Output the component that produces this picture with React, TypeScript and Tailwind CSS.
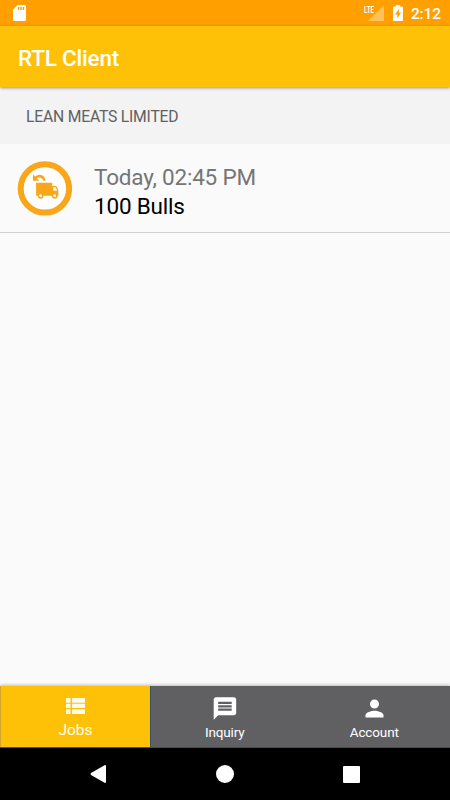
import type { ReactNode } from "react";

function StatusBar() {
  return (
    <div className="flex h-[26px] shrink-0 items-center bg-[#ffa000] text-white">
      <svg className="ml-[13px] h-4 w-[13px]" viewBox="0 0 13 16" fill="currentColor">
        <path
          fillRule="evenodd"
          d="M4.7 0H11.5Q13 0 13 1.5V14.5Q13 16 11.5 16H1.5Q0 16 0 14.5V4.7ZM4.9 2V5H6.4V2ZM7.3 2V5H8.8V2ZM9.7 2V5H11.2V2Z"
        />
      </svg>
      <div className="ml-auto mr-[9px] flex items-center">
        <div className="relative mr-[9px] h-4 w-5">
          <svg className="h-4 w-5" viewBox="0 0 20 16" fill="currentColor">
            <path d="M20 0V16H4Z" opacity="0.35" />
          </svg>
          <span className="absolute left-0 top-0 origin-left scale-x-[0.65] text-[9.5px] font-bold leading-[9px]">
            LTE
          </span>
        </div>
        <svg className="mr-2 h-4 w-[10px]" viewBox="0 0 10 16" fill="currentColor">
          <path
            fillRule="evenodd"
            d="M3 0H7V1.5H9Q10 1.5 10 2.5V15Q10 16 9 16H1Q0 16 0 15V2.5Q0 1.5 1 1.5H3ZM6.3 3.6L2 9.4H4.3V13.5L8 7.8H5.7Z"
          />
        </svg>
        <span className="mt-0.5 text-[15.5px] font-medium leading-4 tracking-[-0.1px]">2:12</span>
      </div>
    </div>
  );
}

function TruckIcon() {
  return (
    <svg className="h-[55px] w-[55px]" viewBox="-0.9 -0.4 55 55">
      <circle cx="27" cy="27" r="24.2" fill="#fff" stroke="#faa61a" strokeWidth="6" />
      <path
        d="M15 12.8L17.2 15Q20 12.8 23.2 13.6Q27.3 14.8 27.6 19.4H25.6Q24.6 16.4 22 16.1Q20 16 18.8 16.7L21.6 19.4H15Z"
        fill="#faa61a"
      />
      <path
        fillRule="evenodd"
        d="M18.2 21.3H34.3V34.4H18.2ZM34.3 24.6H37.2Q38.6 24.6 39.3 26L40.5 29.3V34.4H34.3ZM35.4 25.9V29.4H39.2L38.2 26.9Q37.9 25.9 37 25.9Z"
        fill="#faa61a"
      />
      <circle cx="22.7" cy="34.4" r="2.2" fill="#fff" stroke="#faa61a" strokeWidth="1.5" />
      <circle cx="36.8" cy="34.4" r="2.2" fill="#fff" stroke="#faa61a" strokeWidth="1.5" />
    </svg>
  );
}

function JobRow({ time, title }: { time: string; title: string }) {
  return (
    <div className="flex h-[89px] items-center gap-[22px] border-b border-[#d0d0d0] pl-[17px] pt-px">
      <TruckIcon />
      <div className="mt-[7px] text-[22.5px] leading-[29px] tracking-[-0.2px]">
        <p className="text-[#757575]">{time}</p>
        <p className="text-black">{title}</p>
      </div>
    </div>
  );
}

function Tab({ label, active, children }: { label: string; active?: boolean; children: ReactNode }) {
  return (
    <div
      className={
        active
          ? "flex w-[151px] flex-col items-center border-x border-l-[#d3a32c] border-r-[#35506b] bg-[#ffc107] pt-[7px] text-[15.5px] text-[#fffbe8]"
          : "flex flex-1 flex-col items-center bg-[#606062] pr-[2px] pt-[9px] text-[13.5px] tracking-[-0.15px] text-white"
      }
    >
      {children}
      <span className={active ? "mt-[1px] leading-[18px]" : "mt-[2px] leading-4"}>{label}</span>
    </div>
  );
}

export default function App() {
  return (
    <div className="flex h-[800px] w-[450px] flex-col overflow-hidden bg-[#fafafa] font-['Roboto',sans-serif]">
      <StatusBar />
      <header className="z-10 flex h-[61px] shrink-0 items-center bg-[#ffc107] pl-[18px] pt-[4px] shadow-[0_1px_3px_rgba(0,0,0,0.4)]">
        <h1 className="text-[22.5px] font-medium tracking-[-0.2px] text-white">RTL Client</h1>
      </header>
      <main className="flex-1">
        <h2 className="flex h-[57px] items-center bg-[#f3f3f3] pl-[26px] pt-[3px] text-[15.7px] tracking-[-0.2px] text-[#606060]">
          LEAN MEATS LIMITED
        </h2>
        <JobRow time="Today, 02:45 PM" title="100 Bulls" />
      </main>
      <nav className="flex h-[62px] shrink-0 border-b border-[#4c4c4e] shadow-[0_-1px_3px_rgba(0,0,0,0.25)]">
        <Tab label="Jobs" active>
          <svg className="h-[27px] w-[27px]" viewBox="0 0 27 27" fill="currentColor">
            <path d="M4 5H8.5V9.7H4ZM10 5H23V9.7H10ZM4 10.7H8.5V15H4ZM10 10.7H23V15H10ZM4 16.2H8.5V21H4ZM10 16.2H23V21H10Z" />
          </svg>
        </Tab>
        <Tab label="Inquiry">
          <svg className="h-[27px] w-[27px]" viewBox="-0.4 0 24 24" fill="currentColor">
            <path d="M20 2H4c-1.1 0-1.99.9-1.99 2L2 22l4-4h14c1.1 0 2-.9 2-2V4c0-1.1-.9-2-2-2zM6 9h12v2H6V9zm12 5H6v-2h12v2zm0-6H6V6h12v2z" />
          </svg>
        </Tab>
        <Tab label="Account">
          <svg className="h-[27px] w-[27px]" viewBox="0 0 24 24" fill="currentColor">
            <path d="M12 12c2.21 0 4-1.79 4-4s-1.79-4-4-4-4 1.79-4 4 1.79 4 4 4zm0 2c-2.67 0-8 1.34-8 4v2h16v-2c0-2.66-5.33-4-8-4z" />
          </svg>
        </Tab>
      </nav>
      <div className="flex h-[52px] shrink-0 items-center justify-between bg-black pl-[90px] pr-[90px] text-white">
        <svg className="h-[18px] w-4" viewBox="0 0 16 18" fill="currentColor">
          <path d="M15 0Q16 0 16 1V17Q16 18 15 18L1 10Q0 9 1 8Z" />
        </svg>
        <div className="h-[18px] w-[18px] rounded-full bg-white" />
        <div className="h-[17px] w-[17px] rounded-[1px] bg-white" />
      </div>
    </div>
  );
}
